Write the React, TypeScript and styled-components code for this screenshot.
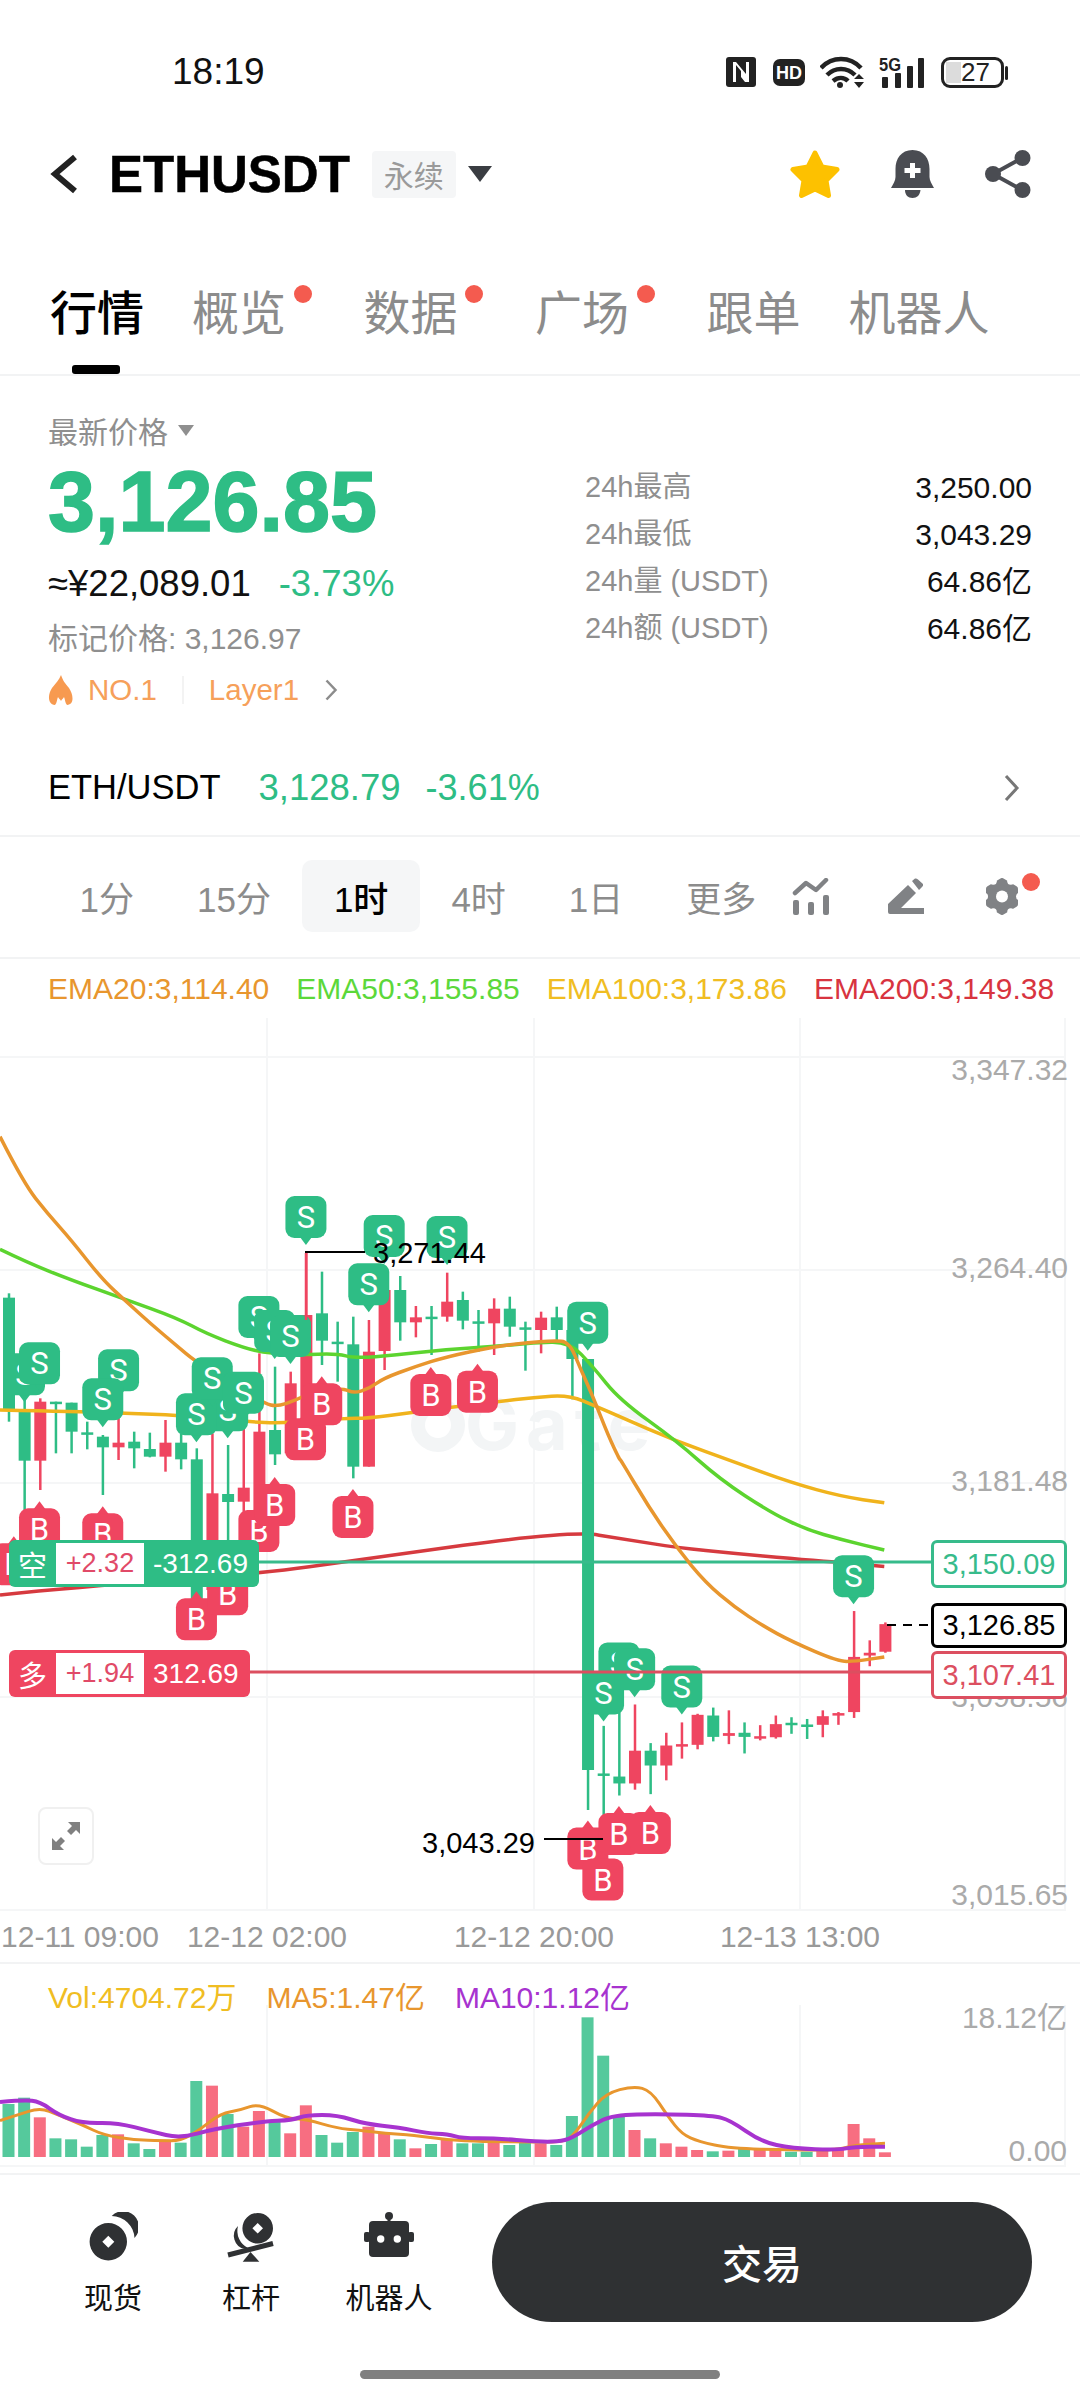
import styled, { createGlobalStyle } from "styled-components";

const GREEN = "#2ebd85";
const RED = "#ef4560";

const GlobalStyle = createGlobalStyle`
  html, body { margin: 0; padding: 0; background: #fff; }
  body { font-family: "Liberation Sans", "Noto Sans CJK SC", sans-serif; }
  #root { width: 1080px; }
`;

const Page = styled.div`
  width: 1080px;
  height: 2400px;
  overflow: hidden;
  display: flex;
  flex-direction: column;
  background: #fff;
  color: #000;
`;

/* status bar */
const StatusBar = styled.div`
  height: 146px;
  padding: 0 76px 2px 172px;
  display: flex;
  align-items: center;
  justify-content: space-between;
  box-sizing: border-box;
`;
const Clock = styled.span`
  font-size: 37px;
  color: #111;
`;
const StatusIcons = styled.div`
  display: flex;
  align-items: center;
  gap: 15px;
`;
const Battery = styled.div`
  position: relative;
  width: 63px;
  height: 31px;
  border: 3px solid #222;
  border-radius: 9px;
  box-sizing: border-box;
  display: flex;
  align-items: center;
  justify-content: center;
  padding-left: 6px;
  font-size: 26px;
  color: #222;
  background: linear-gradient(#dcdcdc, #dcdcdc) 2px 2px / 15px 21px no-repeat;
  &::after {
    content: "";
    position: absolute;
    right: -7px;
    top: 6px;
    width: 3px;
    height: 14px;
    background: #222;
    border-radius: 2px;
  }
`;

/* header */
const Header = styled.div`
  height: 56px;
  padding: 0 49px 0 48px;
  display: flex;
  align-items: center;
`;
const Symbol = styled.span`
  font-size: 51px;
  font-weight: 700;
  margin-left: 29px;
  -webkit-text-stroke: 0.5px #000;
`;
const KindTag = styled.span`
  margin-left: 22px;
  width: 84px;
  height: 47px;
  background: #f5f6f7;
  border-radius: 4px;
  display: flex;
  align-items: center;
  justify-content: center;
  font-size: 30px;
  color: #9a9a9a;
`;
const HeaderActions = styled.div`
  margin-left: auto;
  display: flex;
  align-items: center;
  gap: 51px;
`;

/* tabs */
const TabBar = styled.div`
  height: 174px;
  padding: 88px 0 0 50px;
  box-sizing: border-box;
  display: flex;
  gap: 48px;
  border-bottom: 2px solid #f2f3f4;
`;
const Tab = styled.div<{ $active?: boolean; $dot?: boolean }>`
  position: relative;
  height: 48px;
  line-height: 48px;
  font-size: 47px;
  font-weight: ${(p) => (p.$active ? 500 : 400)};
  color: ${(p) => (p.$active ? "#000" : "#8c8c8c")};
  padding-right: ${(p) => (p.$dot ? "29.5px" : "0")};
  white-space: nowrap;
  &::before {
    content: "";
    display: ${(p) => (p.$dot ? "block" : "none")};
    position: absolute;
    right: 4px;
    top: -5px;
    width: 18px;
    height: 18px;
    border-radius: 50%;
    background: #f45b4f;
  }
  &::after {
    content: "";
    display: ${(p) => (p.$active ? "block" : "none")};
    position: absolute;
    left: 22px;
    top: 75px;
    width: 48px;
    height: 9px;
    border-radius: 3px;
    background: #000;
  }
`;

/* price block */
const PriceSection = styled.div`
  height: 364px;
  padding: 36px 48px 0;
  box-sizing: border-box;
`;
const PriceLabel = styled.div`
  height: 36px;
  display: flex;
  align-items: center;
  gap: 10px;
  font-size: 30px;
  color: #8f8f8f;
`;
const SmallCaret = styled.span`
  width: 0;
  height: 0;
  border-left: 8px solid transparent;
  border-right: 8px solid transparent;
  border-top: 11px solid #8f8f8f;
`;
const PriceColumns = styled.div`
  display: flex;
  justify-content: space-between;
`;
const LeftColumn = styled.div`
  padding-top: 6px;
`;
const BigPrice = styled.div`
  font-size: 84.5px;
  line-height: 96px;
  font-weight: 700;
  color: ${GREEN};
  -webkit-text-stroke: 1.5px ${GREEN};
`;
const ApproxRow = styled.div`
  margin-top: 14px;
  height: 40px;
  display: flex;
  align-items: center;
  gap: 28px;
  font-size: 36.5px;
  color: #111;
`;
const Change = styled.span`
  color: ${GREEN};
`;
const MarkPrice = styled.div`
  margin-top: 17px;
  line-height: 36px;
  font-size: 30px;
  color: #8f8f8f;
`;
const TagRow = styled.div`
  margin-top: 15px;
  height: 36px;
  display: flex;
  align-items: center;
  font-size: 29.5px;
  color: #f6a05a;
`;
const TagDivider = styled.span`
  width: 2px;
  height: 28px;
  margin: 0 25px;
  background: #f3f3f3;
`;
const StatGrid = styled.div`
  width: 447px;
  margin-top: 16px;
  display: grid;
  grid-template-columns: 1fr auto;
  grid-auto-rows: 47px;
  line-height: 47px;
  font-size: 29px;
`;
const StatLabel = styled.span`
  color: #8f8f8f;
`;
const StatValue = styled.span`
  text-align: right;
  font-size: 30px;
  color: #111;
`;

/* spot row */
const SpotRow = styled.div`
  height: 95px;
  padding: 0 60px 0 48px;
  display: flex;
  align-items: center;
  font-size: 34.5px;
  border-bottom: 2px solid #f2f3f4;
`;
const SpotPrice = styled.span`
  margin-left: 38px;
  font-size: 36.5px;
  color: ${GREEN};
`;
const SpotChange = styled.span`
  margin-left: 25px;
  font-size: 36px;
  color: ${GREEN};
`;

/* interval row */
const IntervalRow = styled.div`
  height: 122px;
  padding: 0 0 2px 48px;
  box-sizing: border-box;
  display: flex;
  align-items: center;
  border-bottom: 2px solid #f2f3f4;
`;
const Interval = styled.div<{ $active?: boolean }>`
  height: 72px;
  padding: 0 31.5px;
  display: flex;
  align-items: center;
  border-radius: 10px;
  font-size: 35px;
  font-weight: ${(p) => (p.$active ? 500 : 400)};
  color: ${(p) => (p.$active ? "#000" : "#8c8c8c")};
  background: ${(p) => (p.$active ? "#f5f6f7" : "transparent")};
`;
const ToolIcons = styled.div`
  margin-left: 4px;
  display: flex;
  align-items: center;
  gap: 59px;
`;
const GearWrap = styled.div`
  position: relative;
  height: 37px;
  margin-left: 2px;
  &::after {
    content: "";
    position: absolute;
    right: -21px;
    top: -5px;
    width: 18px;
    height: 18px;
    border-radius: 50%;
    background: #f45b4f;
  }
`;

/* chart */
const Legend = styled.div`
  height: 59px;
  padding-left: 48px;
  display: flex;
  align-items: center;
  gap: 27px;
  font-size: 30px;
`;
const LegendItem = styled.span<{ $color: string }>`
  color: ${(p) => p.$color};
  white-space: nowrap;
`;
const ChartArea = styled.div`
  position: relative;
  height: 944px;
  border-bottom: 2px solid #f2f3f4;
  box-sizing: content-box;
`;
const ChartSvg = styled.svg`
  display: block;
  width: 1080px;
  height: 100%;
`;
const PositionTag = styled.div<{ $top: number; $color: string }>`
  position: absolute;
  left: 9px;
  top: ${(p) => p.$top}px;
  height: 47px;
  padding: 0 11px 0 0;
  display: flex;
  align-items: center;
  border-radius: 6px;
  background: ${(p) => p.$color};
  color: #fff;
  font-size: 28px;
`;
const PositionSide = styled.span`
  width: 47px;
  text-align: center;
  font-size: 29px;
`;
const PositionPnl = styled.span`
  width: 88px;
  height: 41px;
  margin-right: 9px;
  background: #fff;
  color: #e14a68;
  font-size: 27px;
  display: flex;
  align-items: center;
  justify-content: center;
`;
const PriceTag = styled.div<{ $top: number; $color: string; $height?: number }>`
  position: absolute;
  left: 931px;
  top: ${(p) => p.$top}px;
  width: 136px;
  height: ${(p) => p.$height ?? 48}px;
  box-sizing: border-box;
  border: 3px solid ${(p) => p.$color};
  border-radius: 6px;
  background: #fff;
  color: ${(p) => p.$color};
  font-size: 29px;
  display: flex;
  align-items: center;
  justify-content: center;
`;
const ExpandButton = styled.div`
  position: absolute;
  left: 38px;
  top: 789px;
  width: 56px;
  height: 58px;
  box-sizing: border-box;
  border: 2px solid #f0f0f0;
  border-radius: 8px;
  background: #fff;
  display: flex;
  align-items: center;
  justify-content: center;
`;

/* volume */
const VolumePanel = styled.div`
  position: relative;
  height: 209px;
  border-bottom: 2px solid #f2f3f4;
`;
const VolumeLegend = styled(Legend)`
  position: absolute;
  left: 0;
  top: 0;
  height: 62px;
  gap: 30px;
`;

/* bottom bar */
const BottomBar = styled.div`
  height: 147px;
  padding: 27px 48px 0 44px;
  box-sizing: border-box;
  display: flex;
  align-items: flex-start;
`;
const NavItem = styled.div`
  width: 138px;
  padding-top: 10px;
  display: flex;
  flex-direction: column;
  align-items: center;
  font-size: 29px;
  color: #111;
`;
const NavLabel = styled.span`
  margin-top: 20px;
  line-height: 34px;
`;
const TradeButton = styled.div`
  margin-left: 34px;
  width: 540px;
  height: 120px;
  border-radius: 60px;
  background: #2f3133;
  color: #fff;
  font-size: 40px;
  font-weight: 500;
  display: flex;
  align-items: center;
  justify-content: center;
`;
const HomeBar = styled.div`
  width: 360px;
  height: 9px;
  margin: 48px auto 0;
  border-radius: 5px;
  background: #808080;
`;

/* the zooms of the reference were stretched, these bring their readings back to page pixels */
const z3 = (x: number, y: number): [number, number] => [x / 2.53, 1120 + y / 3];
const z4 = (x: number, y: number): [number, number] => [x / 2.53, 1500 + y / 3];
const z5 = (x: number, y: number): [number, number] => [520 + x / 2.8, 1400 + y / 2.9];
const z6 = (x: number, y: number): [number, number] => [x / 1.452, 1930 + y / 3];

const smooth = (pts: [number, number][]) => {
  let d = `M${pts[0][0]} ${pts[0][1]}`;
  for (let i = 1; i < pts.length - 1; i++) {
    const mx = (pts[i][0] + pts[i + 1][0]) / 2;
    const my = (pts[i][1] + pts[i + 1][1]) / 2;
    d += ` Q${pts[i][0]} ${pts[i][1]} ${mx} ${my}`;
  }
  const last = pts[pts.length - 1];
  return d + ` L${last[0]} ${last[1]}`;
};

const flat = (f: typeof z3, a: number[]) => {
  const out: [number, number][] = [];
  for (let i = 0; i < a.length; i += 2) out.push(f(a[i], a[i + 1]));
  return out;
};

const ema20 = [
  ...flat(z3, [0, 50, 60, 190, 120, 280, 180, 360, 260, 480, 320, 545, 380, 610, 450, 680, 490, 720, 580, 790, 670, 850, 700, 860, 750, 840, 800, 810, 870, 805, 895, 820, 935, 805, 970, 775, 1050, 740, 1130, 710, 1250, 680, 1330, 668, 1400, 662, 1440, 665, 1470, 750, 1500, 830, 1540, 950, 1568, 1020]),
  ...flat(z5, [280, 170, 360, 310, 440, 430, 520, 530, 600, 600, 680, 655, 760, 700, 890, 758, 940, 758, 1020, 745]),
];
const ema50 = [
  ...flat(z3, [0, 388, 70, 428, 180, 480, 310, 535, 450, 595, 520, 640, 620, 685, 680, 700, 760, 705, 850, 700, 900, 715, 1000, 705, 1130, 688, 1250, 680, 1350, 668, 1440, 665, 1500, 740, 1568, 840]),
  ...flat(z5, [440, 120, 560, 230, 700, 325, 800, 375, 900, 405, 1020, 435]),
];
const ema100 = [
  ...flat(z3, [0, 870, 210, 875, 320, 880, 450, 885, 620, 905, 720, 910, 870, 895, 930, 895, 1040, 878, 1150, 860, 1260, 845, 1350, 832, 1440, 825, 1510, 860, 1568, 890]),
  ...flat(z5, [440, 120, 600, 180, 760, 240, 900, 280, 1020, 298]),
];
const ema200 = [
  ...flat(z4, [0, 285, 190, 262, 665, 220, 900, 180, 1445, 92]),
  ...flat(z5, [300, 405, 440, 428, 600, 445, 760, 460, 880, 470, 1020, 483]),
];

type Candle = [string, number, number, number, number];

// color, wick top, body top, body bottom, wick bottom, in the units of the zooms
const candlesA: Candle[] = [
  ["g", 520, 533, 870, 905], ["g", 830, 870, 1022, 1170], ["r", 835, 845, 1022, 1110], ["g", 845, 845, 850, 1000],
  ["g", 848, 848, 935, 1000], ["g", 905, 937, 943, 988], ["g", 945, 950, 982, 1125], ["r", 870, 968, 982, 1020],
  ["g", 935, 965, 985, 1045], ["g", 938, 987, 1010, 1012], ["r", 900, 968, 1010, 1055], ["g", 940, 968, 1018, 1048],
  ["g", 985, 1018, 1440, 1440], ["r", 940, 1120, 1410, 1410], ["g", 975, 1122, 1146, 1260], ["r", 900, 1103, 1145, 1200],
  ["r", 700, 935, 1290, 1290], ["g", 740, 930, 1003, 1035], ["r", 755, 790, 1000, 1000], ["r", 395, 585, 960, 960],
  ["g", 455, 580, 662, 735], ["g", 605, 665, 670, 785], ["g", 590, 673, 1040, 1075], ["r", 600, 695, 1040, 1040],
  ["r", 480, 510, 693, 750], ["g", 468, 510, 607, 662], ["r", 558, 592, 607, 652], ["g", 558, 590, 594, 705],
  ["r", 458, 545, 590, 605], ["g", 515, 540, 602, 628], ["g", 570, 604, 608, 695], ["r", 535, 566, 610, 705],
  ["g", 530, 566, 620, 650], ["g", 605, 622, 627, 752], ["r", 575, 593, 630, 700], ["g", 560, 592, 630, 660],
  ["g", 630, 630, 717, 838], ["g", 717, 717, 1950, 2070],
];
const candlesB: Candle[] = [
  ["g", 945, 1083, 1087, 1210], ["g", 900, 1092, 1112, 1147], ["r", 883, 1017, 1112, 1130], ["g", 995, 1017, 1060, 1143],
  ["r", 965, 1002, 1060, 1103], ["r", 935, 998, 1002, 1040], ["r", 910, 913, 1000, 1013], ["g", 892, 915, 977, 990],
  ["r", 900, 966, 974, 998], ["g", 935, 965, 977, 1025], ["r", 943, 975, 979, 987], ["r", 915, 940, 978, 982],
  ["g", 920, 936, 940, 968], ["g", 925, 941, 945, 983], ["r", 900, 917, 942, 978], ["r", 905, 908, 912, 942],
  ["r", 612, 745, 905, 922], ["r", 697, 733, 741, 772], ["r", 645, 650, 730, 733],
];

const candleShapes = [
  ...candlesA.map((c) => ({ c, conv: (y: number) => 1120 + y / 3 })),
  ...candlesB.map((c) => ({ c, conv: (y: number) => 1400 + y / 2.9 })),
];

// side, center x, top of the box
const markers: ["S" | "B", number, number][] = [
  ["S", ...z3(62, 700)], ["S", ...z3(100, 667)], ["S", ...z3(300, 688)], ["S", ...z3(260, 775)],
  ["S", ...z3(576, 808)], ["S", ...z3(497, 820)], ["S", ...z3(537, 712)], ["S", ...z3(616, 755)],
  ["S", ...z3(655, 528)], ["S", ...z3(695, 570)], ["S", ...z3(735, 585)],
  ["S", ...z3(774, 228)], ["S", ...z3(972, 285)], ["S", ...z3(1131, 288)], ["S", ...z3(933, 430)], ["S", ...z3(1487, 545)],
  ["B", ...z4(35, 130)], ["B", ...z3(100, 1165)], ["B", ...z3(260, 1180)],
  ["B", ...z4(497, 295)], ["B", ...z4(576, 220)], ["B", ...z3(655, 1170)], ["B", ...z3(695, 1092)], ["B", ...z3(893, 1128)],
  ["B", ...z3(773, 895)], ["B", ...z3(814, 790)], ["B", ...z3(1090, 762)], ["B", ...z3(1208, 752)],
  ["S", ...z5(277, 703)], ["S", ...z5(234, 790)], ["S", ...z5(321, 720)], ["S", ...z5(453, 770)], ["S", ...z5(934, 450)],
  ["B", ...z5(190, 1240)], ["B", ...z5(277, 1198)], ["B", ...z5(365, 1195)], ["B", ...z5(232, 1330)],
];

const volumeBars: [string, number][] = [
  ["g", 522], ["g", 503], ["r", 562], ["g", 625], ["g", 628], ["g", 650], ["g", 615], ["r", 613], ["g", 640], ["g", 657],
  ["r", 630], ["g", 638], ["g", 453], ["r", 467], ["g", 552], ["r", 590], ["r", 543], ["g", 575], ["r", 610], ["r", 526],
  ["g", 615], ["g", 638], ["g", 606], ["r", 590], ["r", 610], ["g", 628], ["r", 655], ["g", 642], ["r", 628], ["g", 640],
  ["g", 640], ["r", 630], ["g", 645], ["g", 635], ["r", 640], ["g", 645], ["g", 558], ["g", 262], ["g", 377], ["g", 555],
  ["r", 600], ["g", 625], ["r", 640], ["r", 650], ["r", 660], ["g", 664], ["r", 662], ["g", 655], ["r", 660], ["r", 660],
  ["g", 665], ["g", 665], ["r", 662], ["r", 660], ["r", 582], ["r", 625], ["r", 667],
];
const ma5 = flat(z6, [0, 572, 25, 555, 58, 533, 85, 555, 120, 585, 150, 615, 195, 630, 235, 632, 262, 632, 290, 600, 320, 550, 350, 540, 376, 520, 415, 565, 445, 568, 490, 595, 520, 600, 560, 610, 600, 615, 650, 630, 700, 635, 763, 635, 810, 637, 830, 625, 855, 550, 880, 490, 920, 468, 945, 482, 970, 560, 990, 612, 1015, 635, 1060, 655, 1150, 660, 1217, 660, 1240, 645, 1285, 640]);
const ma10 = flat(z6, [0, 516, 35, 510, 58, 515, 85, 555, 120, 580, 170, 578, 220, 605, 262, 625, 310, 597, 380, 575, 425, 570, 445, 555, 490, 555, 530, 582, 580, 592, 620, 610, 650, 612, 670, 625, 720, 625, 780, 635, 810, 635, 830, 625, 860, 585, 890, 555, 960, 552, 1035, 557, 1060, 570, 1105, 635, 1150, 655, 1217, 660, 1240, 650, 1285, 650]);

const Marker = ({ side, x, y }: { side: "S" | "B"; x: number; y: number }) => {
  const color = side === "S" ? GREEN : RED;
  const tip = side === "S"
    ? `${x - 6},${y + 41} ${x + 6},${y + 41} ${x},${y + 49}`
    : `${x - 6},${y + 1} ${x + 6},${y + 1} ${x},${y - 7}`;
  return (
    <g>
      <polygon points={tip} fill={color} />
      <rect x={x - 20.5} y={y} width={41} height={42} rx={9} fill={color} />
      <text x={x} y={y + 32} fontSize={31} textAnchor="middle" fill="#fff" fontFamily="Roboto, sans-serif">
        {side}
      </text>
    </g>
  );
};

const Chart = () => (
  <ChartSvg viewBox="0 1018 1080 944">
    {[267, 534, 800, 1065].map((x) => (
      <line key={x} x1={x} x2={x} y1={1018} y2={1910} stroke="#f5f6f7" strokeWidth={2} />
    ))}
    {[1057, 1270, 1483, 1697, 1910].map((y) => (
      <line key={y} x1={0} x2={1066} y1={y} y2={y} stroke="#f5f6f7" strokeWidth={2} />
    ))}
    <g fill="#f3f5f6">
      <circle cx={438} cy={1425} r={20} fill="none" stroke="#f3f5f6" strokeWidth={14} />
      <text x={465} y={1450} fontSize={72} fontWeight={700} letterSpacing={7} fontFamily="Inter, sans-serif">Gate</text>
    </g>
    <g fontSize={30} fill="#aaaaaa" textAnchor="end">
      <text x={1068} y={1080}>3,347.32</text>
      <text x={1068} y={1278}>3,264.40</text>
      <text x={1068} y={1491}>3,181.48</text>
      <text x={1068} y={1707}>3,098.56</text>
      <text x={1068} y={1905}>3,015.65</text>
    </g>
    <g fontSize={30} fill="#999999" textAnchor="middle">
      <text x={80} y={1947}>12-11 09:00</text>
      <text x={267} y={1947}>12-12 02:00</text>
      <text x={534} y={1947}>12-12 20:00</text>
      <text x={800} y={1947}>12-13 13:00</text>
    </g>
    <path d={smooth(ema200)} fill="none" stroke="#d63a3f" strokeWidth={3.5} />
    {candleShapes.map(({ c, conv }, i) => {
      const x = 9 + i * 15.65;
      const fill = c[0] === "g" ? "#2ebd85" : RED;
      const top = conv(c[2]);
      return (
        <g key={i} fill={fill}>
          <rect x={x - 1.25} y={conv(c[1])} width={2.5} height={conv(c[4]) - conv(c[1])} />
          <rect x={x - 6} y={top} width={12} height={Math.max(conv(c[3]) - top, 2.5)} />
        </g>
      );
    })}
    <line x1={250} x2={931} y1={1562} y2={1562} stroke="#37bb8b" strokeWidth={3} />
    <path d={smooth(ema100)} fill="none" stroke="#f0b31c" strokeWidth={3.5} />
    <path d={smooth(ema50)} fill="none" stroke="#5cd42f" strokeWidth={3.5} />
    <path d={smooth(ema20)} fill="none" stroke="#e8962e" strokeWidth={3.5} />
    {markers.map(([side, x, y], i) => (
      <Marker key={i} side={side} x={x} y={y} />
    ))}
    <line x1={240} x2={931} y1={1672} y2={1672} stroke="#dc4f60" strokeWidth={3} />
    <line x1={887} x2={931} y1={1625} y2={1625} stroke="#000" strokeWidth={2} strokeDasharray="9 7" />
    <polyline points="306,1300 306,1252 365,1252" fill="none" stroke="#000" strokeWidth={2} />
    <line x1={306} x2={306} y1={1253} y2={1320} stroke={RED} strokeWidth={2.5} />
    <line x1={544} x2={603} y1={1839} y2={1839} stroke="#000" strokeWidth={2} />
    <g fontSize={29} fill="#000">
      <text x={373} y={1263}>3,271.44</text>
      <text x={422} y={1853}>3,043.29</text>
    </g>
  </ChartSvg>
);

const VolumeChart = () => (
  <ChartSvg viewBox="0 1964 1080 209">
    {[267, 534, 800, 1065].map((x) => (
      <line key={x} x1={x} x2={x} y1={2005} y2={2166} stroke="#f5f6f7" strokeWidth={2} />
    ))}
    <line x1={0} x2={1066} y1={2166} y2={2166} stroke="#f5f6f7" strokeWidth={2} />
    {volumeBars.map(([c, top], i) => {
      const y = 1930 + top / 3;
      return (
        <rect key={i} x={2.5 + i * 15.65} y={y} width={12} height={2157 - y} fill={c === "g" ? "#55c99c" : "#f76e81"} />
      );
    })}
    <path d={smooth(ma5)} fill="none" stroke="#e8962e" strokeWidth={3} />
    <path d={smooth(ma10)} fill="none" stroke="#a733cf" strokeWidth={4} />
    <g fontSize={30} fill="#aaaaaa" textAnchor="end">
      <text x={1067} y={2028}>18.12亿</text>
      <text x={1067} y={2161}>0.00</text>
    </g>
  </ChartSvg>
);

const Chevron = ({ w, h, color, sw }: { w: number; h: number; color: string; sw: number }) => (
  <svg width={w} height={h} viewBox={`0 0 ${w} ${h}`}>
    <polyline points={`${sw},${sw} ${w - sw},${h / 2} ${sw},${h - sw}`} fill="none" stroke={color} strokeWidth={sw} />
  </svg>
);

const App = () => (
  <Page>
    <GlobalStyle />
    <StatusBar>
      <Clock>18:19</Clock>
      <StatusIcons>
        <svg width={30} height={30} viewBox="0 0 30 30" style={{ marginRight: 2 }}>
          <rect width={30} height={30} rx={3} fill="#222" />
          <path d="M7 5h3l10 12V5h3v20h-4l-4-5v-6l-5-6v17H7z" fill="#fff" />
        </svg>
        <svg width={32} height={27} viewBox="0 0 32 27">
          <rect width={32} height={27} rx={7} fill="#222" />
          <text x={16} y={20} fontSize={18} fontWeight={700} textAnchor="middle" fill="#fff">HD</text>
        </svg>
        <svg width={44} height={32} viewBox="0 0 44 32">
          <g fill="none" stroke="#222" strokeWidth={4.5}>
            <path d="M1 12c11-12 29-12 40 0" />
            <path d="M7 19c8-8 20-8 28 0" />
            <path d="M13 25c5-4 11-4 15 0" />
          </g>
          <circle cx={20} cy={29} r={3} fill="#222" />
          <path d="M39 18l5 5H34zM39 32l-5-6h10z" fill="#222" />
        </svg>
        <svg width={47} height={32} viewBox="0 0 47 32">
          <text x={0} y={15} fontSize={18} fontWeight={700} fill="#222" textLength={22} lengthAdjust="spacingAndGlyphs">5G</text>
          <rect x={3} y={21} width={6} height={11} rx={1} fill="#222" />
          <rect x={16} y={17} width={6} height={15} rx={1} fill="#222" />
          <rect x={28} y={10} width={6} height={22} rx={1} fill="#222" />
          <rect x={39} y={2} width={6} height={30} rx={1} fill="#222" />
        </svg>
        <Battery>27</Battery>
      </StatusIcons>
    </StatusBar>

    <Header>
      <svg width={32} height={40} viewBox="0 0 32 40">
        <polyline points="27,3 7,20 27,37" fill="none" stroke="#222" strokeWidth={6} />
      </svg>
      <Symbol>ETHUSDT</Symbol>
      <KindTag>永续</KindTag>
      <svg width={24} height={16} viewBox="0 0 24 16" style={{ marginLeft: 12 }}>
        <polygon points="0,0 24,0 12,16" fill="#3a3d42" />
      </svg>
      <HeaderActions>
        <svg width={50} height={49} viewBox="0 0 50 49">
          <path d="M25 3l7 14 15 2.500-11 11 2.500 15-13.500-6.500-13.500 6.500 2.500-15-11-11 15-2.500z" fill="#fdc100" stroke="#fdc100" strokeWidth={5} strokeLinejoin="round" />
        </svg>
        <svg width={43} height={48} viewBox="0 0 43 48">
          <path d="M21.500 0C33 0 38.500 9 38.500 19V27C38.500 31 41 34 43 38H0C2 34 4.500 31 4.500 27V19C4.500 9 10 0 21.500 0Z" fill="#4a4c52" />
          <path d="M14 40H29.500C29 45 26 48 21.500 48S14 45 14 40Z" fill="#4a4c52" />
          <path d="M19 13h5v5h5.500v5H24v5h-5v-5h-5.500v-5H19z" fill="#fff" />
        </svg>
        <svg width={46} height={48} viewBox="0 0 46 48">
          <path d="M37 8L8 24l29 16" fill="none" stroke="#4a4c52" strokeWidth={4} />
          <circle cx={37.500} cy={8} r={8} fill="#4a4c52" />
          <circle cx={8} cy={24} r={8} fill="#4a4c52" />
          <circle cx={37.500} cy={40} r={8} fill="#4a4c52" />
        </svg>
      </HeaderActions>
    </Header>

    <TabBar>
      <Tab $active>行情</Tab>
      <Tab $dot>概览</Tab>
      <Tab $dot>数据</Tab>
      <Tab $dot>广场</Tab>
      <Tab>跟单</Tab>
      <Tab>机器人</Tab>
    </TabBar>

    <PriceSection>
      <PriceLabel>
        最新价格
        <SmallCaret />
      </PriceLabel>
      <PriceColumns>
        <LeftColumn>
          <BigPrice>3,126.85</BigPrice>
          <ApproxRow>
            <span>≈¥22,089.01</span>
            <Change>-3.73%</Change>
          </ApproxRow>
          <MarkPrice>标记价格: 3,126.97</MarkPrice>
          <TagRow>
            <svg width={26} height={30} viewBox="0 0 26 30" style={{ marginRight: 14 }}>
              <path d="M13 0c2 6 4 8 8 13 4 6 6 16-2 17-2-2-2-6-3-8-1 2-2 2-3 4-1-2-2-2-3-4-1 2-1 6-3 8C-1 29 0 19 4 13c4-5 7-8 9-13z" fill="#f79a50" />
            </svg>
            NO.1
            <TagDivider />
            Layer1
            <span style={{ width: 25 }} />
            <Chevron w={14} h={24} color="#8c8c8c" sw={2.5} />
          </TagRow>
        </LeftColumn>
        <StatGrid>
          <StatLabel>24h最高</StatLabel>
          <StatValue>3,250.00</StatValue>
          <StatLabel>24h最低</StatLabel>
          <StatValue>3,043.29</StatValue>
          <StatLabel>24h量 (USDT)</StatLabel>
          <StatValue>64.86亿</StatValue>
          <StatLabel>24h额 (USDT)</StatLabel>
          <StatValue>64.86亿</StatValue>
        </StatGrid>
      </PriceColumns>
    </PriceSection>

    <SpotRow>
      <span>ETH/USDT</span>
      <SpotPrice>3,128.79</SpotPrice>
      <SpotChange>-3.61%</SpotChange>
      <span style={{ marginLeft: "auto", display: "flex" }}>
        <Chevron w={17} h={30} color="#777" sw={3} />
      </span>
    </SpotRow>

    <IntervalRow>
      <Interval>1分</Interval>
      <Interval>15分</Interval>
      <Interval $active>1时</Interval>
      <Interval>4时</Interval>
      <Interval>1日</Interval>
      <Interval>更多</Interval>
      <ToolIcons>
        <svg width={37} height={37} viewBox="0 0 37 37">
          <path d="M3 15L14 5l10 7L34 2" fill="none" stroke="#808285" strokeWidth={4.5} strokeLinecap="round" strokeLinejoin="round" />
          <rect x={1} y={22} width={6} height={15} rx={2} fill="#808285" />
          <rect x={16} y={24} width={6} height={13} rx={2} fill="#808285" />
          <rect x={31} y={17} width={6} height={20} rx={2} fill="#808285" />
        </svg>
        <svg width={36} height={36} viewBox="0 0 36 36">
          <path d="M0 26L20 7l8 8-15 15h23v6H2q-2 0-2-2z" fill="#808285" />
          <path d="M24 3l3-2.500q1.500-.5 3 1l5 4.500q.5 2-1 3l-3 3z" fill="#808285" />
        </svg>
        <GearWrap>
          <svg width={34} height={37} viewBox="0 0 34 37">
            <polygon points="17,3 30,10.750 30,26.250 17,34 4,26.250 4,10.750" fill="#808285" stroke="#808285" strokeWidth={6} strokeLinejoin="round" />
            <circle cx={17} cy={18.500} r={6} fill="#fff" />
            <circle cx={34.500} cy={18.500} r={3.500} fill="#fff" />
            <circle cx={-0.500} cy={18.500} r={3.500} fill="#fff" />
            <circle cx={25.750} cy={3.340} r={3.500} fill="#fff" />
            <circle cx={8.250} cy={3.340} r={3.500} fill="#fff" />
            <circle cx={25.750} cy={33.660} r={3.500} fill="#fff" />
            <circle cx={8.250} cy={33.660} r={3.500} fill="#fff" />
          </svg>
        </GearWrap>
      </ToolIcons>
    </IntervalRow>

    <Legend>
      <LegendItem $color="#e8962e">EMA20:3,114.40</LegendItem>
      <LegendItem $color="#5cd83a">EMA50:3,155.85</LegendItem>
      <LegendItem $color="#f0bd22">EMA100:3,173.86</LegendItem>
      <LegendItem $color="#d8343f">EMA200:3,149.38</LegendItem>
    </Legend>

    <ChartArea>
      <Chart />
      <PositionTag $top={522} $color={GREEN}>
        <PositionSide>空</PositionSide>
        <PositionPnl>+2.32</PositionPnl>
        -312.69
      </PositionTag>
      <PositionTag $top={632} $color={RED}>
        <PositionSide>多</PositionSide>
        <PositionPnl>+1.94</PositionPnl>
        312.69
      </PositionTag>
      <PriceTag $top={522} $color="#37bb8b">3,150.09</PriceTag>
      <PriceTag $top={585} $color="#000" $height={45}>3,126.85</PriceTag>
      <PriceTag $top={633} $color="#dc4f60">3,107.41</PriceTag>
      <ExpandButton>
        <svg width={30} height={30} viewBox="0 0 30 30">
          <path d="M17 1h12v12l-4-4-5 5-4-4 5-5zM13 29H1V17l4 4 5-5 4 4-5 5z" fill="#808080" />
        </svg>
      </ExpandButton>
    </ChartArea>

    <VolumePanel>
      <VolumeChart />
      <VolumeLegend>
        <LegendItem $color="#f0bd22">Vol:4704.72万</LegendItem>
        <LegendItem $color="#e8962e">MA5:1.47亿</LegendItem>
        <LegendItem $color="#a733cf">MA10:1.12亿</LegendItem>
      </VolumeLegend>
    </VolumePanel>

    <BottomBar>
      <NavItem>
        <svg width={50} height={50} viewBox="0 0 50 50">
          <path fillRule="evenodd" fill="#2f3133" d="M20.300 11a18.700 18.700 0 1 1 0 37.400 18.700 18.700 0 0 1 0-37.400zM20.300 23.700l-6 6 6 6 6-6z" />
          <path d="M23.700 4A15.700 15.700 0 0 1 46.500 26A23 23 0 0 0 23.700 4z" fill="#2f3133" />
        </svg>
        <NavLabel>现货</NavLabel>
      </NavItem>
      <NavItem>
        <svg width={50} height={50} viewBox="0 0 50 50">
          <path fillRule="evenodd" fill="#2f3133" d="M31.700 1a15.300 15.300 0 1 1 0 30.600 15.300 15.300 0 0 1 0-30.600zM31.700 11l-5.300 5.300 5.300 5.300 5.300-5.300z" />
          <path d="M12 14A13.500 13.500 0 0 0 19 37L22 36A19 19 0 0 1 12 14z" fill="#2f3133" />
          <path d="M2 43L47 31.500" stroke="#2f3133" strokeWidth={5} />
          <path d="M24.500 40L33.300 49.700H16.700z" fill="#2f3133" />
        </svg>
        <NavLabel>杠杆</NavLabel>
      </NavItem>
      <NavItem>
        <svg width={50} height={50} viewBox="0 0 50 50">
          <circle cx={25} cy={4} r={4} fill="#2f3133" />
          <rect x={23.500} y={4} width={3} height={6} fill="#2f3133" />
          <rect x={5} y={9} width={40} height={36} rx={4} fill="#2f3133" />
          <rect x={0} y={20} width={6} height={10} rx={2} fill="#2f3133" />
          <rect x={44} y={20} width={6} height={10} rx={2} fill="#2f3133" />
          <circle cx={16.700} cy={27} r={3.700} fill="#fff" />
          <circle cx={33.300} cy={27} r={3.700} fill="#fff" />
        </svg>
        <NavLabel>机器人</NavLabel>
      </NavItem>
      <TradeButton>交易</TradeButton>
    </BottomBar>
    <HomeBar />
  </Page>
);

export default App;
